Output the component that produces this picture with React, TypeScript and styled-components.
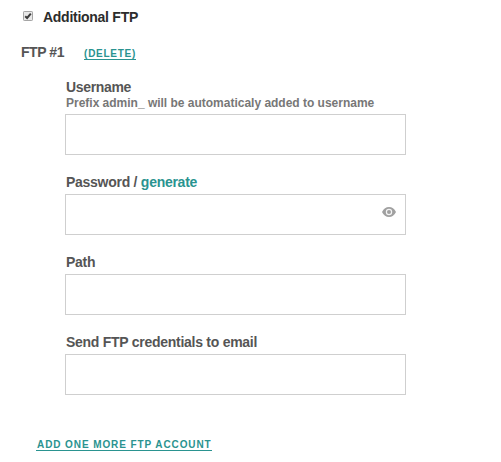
import React from 'react';
import styled, { createGlobalStyle } from 'styled-components';

const Global = createGlobalStyle`
  * { box-sizing: border-box; }
  body { margin: 0; background: #fff; font-family: "Liberation Sans", Arial, sans-serif; }
`;
const Page = styled.main`
  width: 501px; height: 462px; overflow: hidden; background: #fff;
  display: flex; flex-direction: column; align-items: flex-start;
  font-weight: 700; color: #555;
`;
const Toggle = styled.label`
  display: flex; align-items: center; gap: 10px; height: 16px; margin: 9px 0 0 23px;
  font-size: 14px; line-height: 16px; letter-spacing: -0.27px; color: #2c2c2c;
`;
const CheckMark = styled.svg`
  width: 10px; height: 10px; display: block; margin-top: -2px;
`;
const Heading = styled.div`
  display: flex; align-items: baseline; gap: 20px; margin: 19px 0 0 21px;
  height: 16px; font-size: 14px; line-height: 16px; letter-spacing: -0.43px;
`;
const ActionLink = styled.a<{ $spacing: number }>`
  font-size: 10px; line-height: 11px; letter-spacing: ${p => p.$spacing}px;
  color: #2a9390; border-bottom: 1px solid #2a9390; text-decoration: none;
`;
const Form = styled.div`
  display: flex; flex-direction: column; margin: 19px 0 0 65px; width: 341px;
`;
const Field = styled.div`
  display: flex; flex-direction: column; margin-bottom: 19px;
  &:last-child { margin-bottom: 0; }
`;
const Label = styled.div<{ $gap?: number; $spacing?: number }>`
  font-size: 14px; line-height: 16px; letter-spacing: ${p => p.$spacing ?? -0.27}px;
  padding-left: 1px; margin-bottom: ${p => p.$gap ?? 4}px;
`;
const Accent = styled.span`color: #2a9390;`;
const Hint = styled.div`
  font-size: 12px; line-height: 14px; letter-spacing: -0.01px; color: #777;
  padding-left: 1px; margin-bottom: 4px; white-space: nowrap;
`;
const InputBox = styled.div`
  height: 41px; border: 1px solid #cfcfcf; display: flex; align-items: center; justify-content: flex-end;
  padding: 0 9px 6px 0;
`;
const Footer = styled.div`
  margin: 44px 0 0 36px; display: flex;
  ${ActionLink} { padding-left: 1px; }
`;

export default function App() {
  return (
    <Page>
      <Global />
      <Toggle>
        <CheckMark viewBox="0 0 10 10">
          <rect x=".5" y=".5" width="9" height="9" rx=".7" fill="#e8e8e8" stroke="#a5a5a5" />
          <path d="M2.2 5.3 4.1 7 7.8 2.7" fill="none" stroke="#3c3c3c" strokeWidth="2" />
        </CheckMark>
        Additional FTP
      </Toggle>
      <Heading>FTP #1 <ActionLink $spacing={0.73}>(DELETE)</ActionLink></Heading>
      <Form>
        <Field>
          <Label $gap={1} $spacing={-0.33}>Username</Label>
          <Hint>Prefix admin_ will be automaticaly added to username</Hint>
          <InputBox />
        </Field>
        <Field>
          <Label>Password / <Accent>generate</Accent></Label>
          <InputBox>
            <svg width="14" height="10" viewBox="0 0 14 10">
              <path d="M0 5Q2.5 0 7 0t7 5q-2.5 5-7 5T0 5Z" fill="#a0a0a0" />
              <circle cx="7" cy="5" r="3.2" fill="#f4f4f4" /><circle cx="7" cy="5" r="2" fill="#a0a0a0" />
            </svg>
          </InputBox>
        </Field>
        <Field><Label>Path</Label><InputBox /></Field>
        <Field><Label>Send FTP credentials to email</Label><InputBox /></Field>
      </Form>
      <Footer><ActionLink $spacing={0.91}>ADD ONE MORE FTP ACCOUNT</ActionLink></Footer>
    </Page>
  );
}
